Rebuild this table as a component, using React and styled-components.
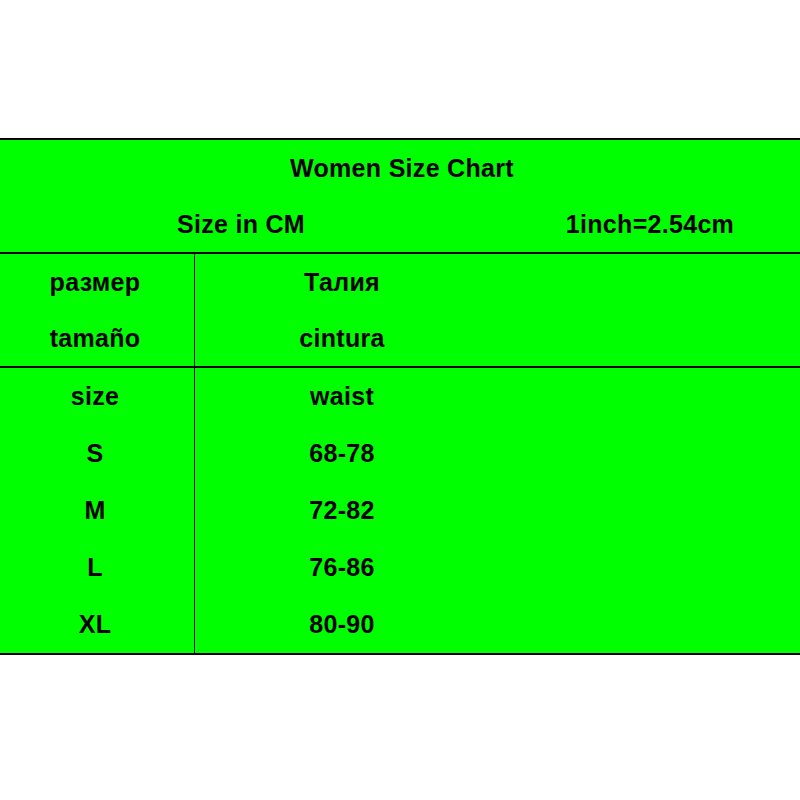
import React from 'react'
import styled, { createGlobalStyle } from 'styled-components'

const GlobalStyle = createGlobalStyle`
    html, body {
        margin: 0;
        padding: 0;
        background: #ffffff;
    }
    body {
        font-family: "Liberation Sans", Arial, sans-serif;
    }
`;

const Page = styled.div`
    width: 800px;
    height: 800px;
    padding-top: 138px;
    box-sizing: border-box;
    background: #ffffff;
`;

const Chart = styled.div`
    width: 800px;
    background: #00ff00;
    border-top: 2px solid #000;
    border-bottom: 2px solid #000;
    display: flex;
    flex-flow: column nowrap;
`;

const Group = styled.div`
    display: grid;
    grid-template-columns: ${props => props.columns || '195px 294px 1fr'};
    grid-auto-rows: ${props => props.rowHeight || '56px'};
    border-top: ${props => props.divided ? '2px solid #000' : 'none'};
`;

const Cell = styled.div`
    grid-column: ${props => props.span || 'auto'};
    display: flex;
    align-items: center;
    justify-content: center;
    font-size: 25px;
    font-weight: 700;
    letter-spacing: 0.3px;
    color: #000;
    white-space: nowrap;
    border-right: ${props => props.ruled ? '1px solid #000' : 'none'};
    padding-right: ${props => props.shift || '0px'};
    padding-left: ${props => props.push || '0px'};
`;

const sizes = [
    ['size', 'waist'],
    ['S', '68-78'],
    ['M', '72-82'],
    ['L', '76-86'],
    ['XL', '80-90'],
];

function App() {
    return (
        <Page>
            <GlobalStyle />
            <Chart>
                <Group columns="488px 1fr">
                    <Cell span="1 / -1" push="4px">Women Size Chart</Cell>
                    <Cell shift="6px">Size in CM</Cell>
                    <Cell push="12px">1inch=2.54cm</Cell>
                </Group>
                <Group divided>
                    <Cell ruled shift="4px">размер</Cell>
                    <Cell>Талия</Cell>
                    <Cell />
                    <Cell ruled shift="4px">tamaño</Cell>
                    <Cell>cintura</Cell>
                    <Cell />
                </Group>
                <Group divided rowHeight="57px">
                    {sizes.map(([size, waist]) => (
                        <React.Fragment key={size}>
                            <Cell ruled shift="4px">{size}</Cell>
                            <Cell>{waist}</Cell>
                            <Cell />
                        </React.Fragment>
                    ))}
                </Group>
            </Chart>
        </Page>
    )
}

export default App
